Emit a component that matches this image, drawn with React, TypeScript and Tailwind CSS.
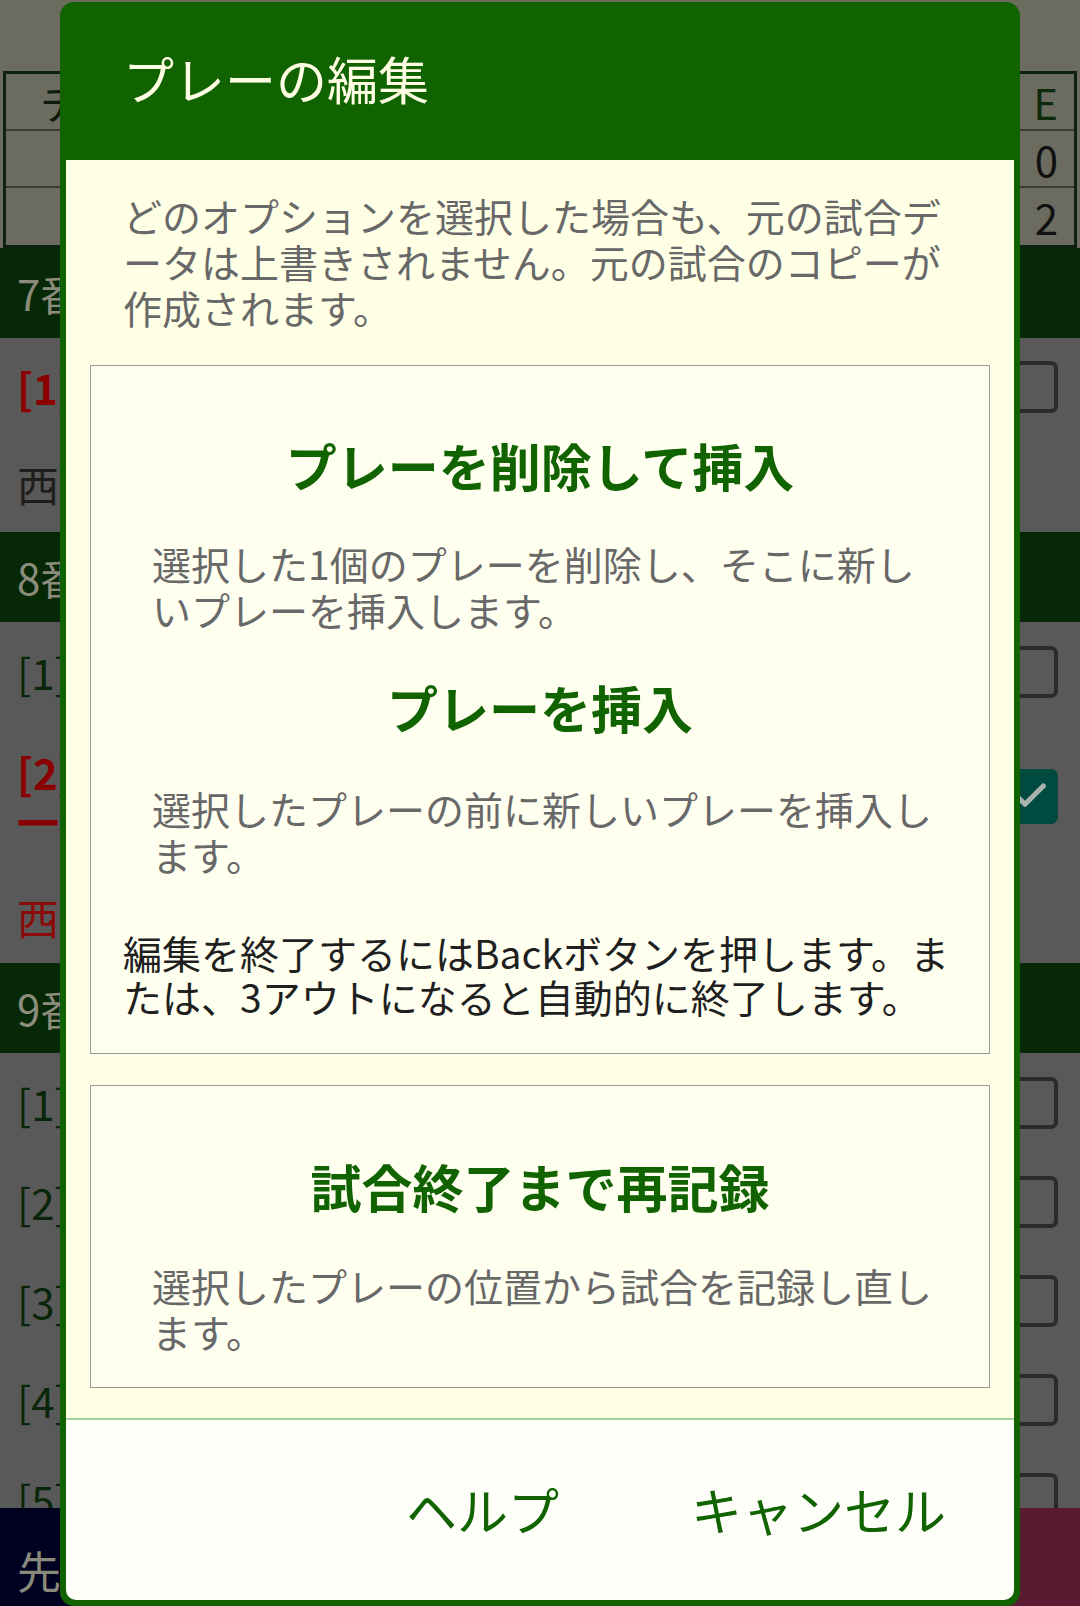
import { Check } from "lucide-react";

const CheckBox = ({ checked = false }: { checked?: boolean }) =>
  checked ? (
    <div className="w-[56px] h-[55px] rounded-[7px] bg-[#004a40] flex items-center justify-center">
      <Check size={40} strokeWidth={3} className="text-[#a9b3ad]" />
    </div>
  ) : (
    <div className="w-[54px] h-[52px] rounded-[7px] border-[4px] border-[#2b2b2b]" />
  );

const Row = ({
  h,
  children,
  box,
}: {
  h: string;
  children: React.ReactNode;
  box?: "on" | "off";
}) => (
  <div className={`${h} flex items-center justify-between pl-[17px] pr-[22px]`}>
    <div>{children}</div>
    {box && <CheckBox checked={box === "on"} />}
  </div>
);

const Band = ({ label }: { label: string }) => (
  <div className="h-[90px] bg-[#062806] flex items-center pl-[17px] text-[42px] text-[#8c8c7c]">
    {label}
  </div>
);

const Background = () => (
  <div className="flex flex-col text-[42px] leading-none">
    <div className="h-[71px] bg-[#6b6b5f]" />

    {/* score table */}
    <div className="h-[177px] bg-[#6b6b5f] flex justify-between">
      <div className="ml-[3px] w-[200px] border-[3px] border-r-0 border-[#0d220d] grid grid-rows-3">
        <div className="border-b-2 border-[#3a3a36] flex items-center pl-[34px] text-[#0d1a0d]">チーム</div>
        <div className="border-b-2 border-[#3a3a36]" />
        <div />
      </div>
      <div className="mr-[3px] w-[200px] border-[3px] border-l-0 border-[#0d220d] grid grid-rows-3 text-[#111]">
        <div className="border-b-2 border-[#3a3a36] flex items-center justify-end pr-[16px] text-[#0d2a0d]">E</div>
        <div className="border-b-2 border-[#3a3a36] flex items-center justify-end pr-[16px]">0</div>
        <div className="flex items-center justify-end pr-[16px]">2</div>
      </div>
    </div>

    <Band label="7番 打者" />
    <div className="bg-[#595959]">
      <Row h="h-[98px]" box="off">
        <span className="font-bold text-[#8a0000]">[1]</span>
      </Row>
      <Row h="h-[96px]">
        <span className="text-[#1e1e1e]">西</span>
      </Row>
    </div>

    <Band label="8番 打者" />
    <div className="bg-[#595959]">
      <Row h="h-[100px]" box="off">
        <span className="text-[#0a260a]">[1]</span>
      </Row>
      <div className="h-[148px] flex items-center justify-between pl-[17px] pr-[22px]">
        <div className="flex flex-col gap-[7px]">
          <span className="font-bold text-[#8a0000]">[2]</span>
          <span className="font-bold text-[#8a0000]">一</span>
        </div>
        <CheckBox checked />
      </div>
      <Row h="h-[93px]">
        <span className="text-[#8a0a0a]">西</span>
      </Row>
    </div>

    <Band label="9番 打者" />
    <div className="bg-[#595959] h-[455px] overflow-hidden">
      {["[1]", "[2]", "[3]", "[4]", "[5]"].map((t) => (
        <Row key={t} h="h-[99px]" box="off">
          <span className="text-[#0a260a]">{t}</span>
        </Row>
      ))}
    </div>

    <div className="h-[99px] flex">
      <div className="w-1/2 bg-[#000020] pl-[17px] pt-[40px] text-[44px] text-[#8a8a7a]">先攻</div>
      <div className="w-1/2 bg-[#5a1a32]" />
    </div>
  </div>
);

const OptionTitle = ({ children }: { children: React.ReactNode }) => (
  <h3 className="text-center text-[51px] font-bold leading-[60px] text-[#116300]">{children}</h3>
);

const Desc = ({ children, className = "" }: { children: React.ReactNode; className?: string }) => (
  <p className={`pl-[61px] text-[39px] leading-[46px] text-[#686868] whitespace-nowrap ${className}`}>
    {children}
  </p>
);

export default function App() {
  return (
    <div className="relative w-[1080px] h-[1606px] overflow-hidden bg-[#595959] font-['Noto_Sans_CJK_JP',sans-serif]">
      <Background />

      {/* edit dialog */}
      <div className="absolute left-[60px] top-[2px] w-[960px] rounded-[14px] bg-[#116300] px-[6px] pb-[6px]">
        <div className="h-[158px] flex items-center pl-[57px] pb-[5px] text-[51px] leading-none text-[#fffde4]">
          プレーの編集
        </div>

        <div className="rounded-b-[10px] overflow-hidden">
          <div className="bg-[#ffffe6] pt-[32px] pb-[30px] px-[24px]">
            <p className="pl-[33px] text-[39px] leading-[46px] text-[#686868] whitespace-nowrap">
              どのオプションを選択した場合も、元の試合デ
              <br />
              ータは上書きされません。元の試合のコピーが
              <br />
              作成されます。
            </p>

            <div className="mt-[35px] border border-[#9a9a9a] bg-[#fffff0] pt-[69px] pb-[35px]">
              <OptionTitle>プレーを削除して挿入</OptionTitle>
              <Desc className="mt-[45px]">
                選択した1個のプレーを削除し、そこに新し
                <br />
                いプレーを挿入します。
              </Desc>
              <div className="mt-[45px]">
                <OptionTitle>プレーを挿入</OptionTitle>
              </div>
              <Desc className="mt-[48px]">
                選択したプレーの前に新しいプレーを挿入し
                <br />
                ます。
              </Desc>
              <p className="mt-[53px] pl-[32px] text-[39px] leading-[44px] text-[#1f1f1f] whitespace-nowrap">
                編集を終了するにはBackボタンを押します。ま
                <br />
                たは、3アウトになると自動的に終了します。
              </p>
            </div>

            <div className="mt-[31px] border border-[#9a9a9a] bg-[#fffff0] pt-[70px] pb-[33px]">
              <OptionTitle>試合終了まで再記録</OptionTitle>
              <Desc className="mt-[46px]">
                選択したプレーの位置から試合を記録し直し
                <br />
                ます。
              </Desc>
            </div>
          </div>

          <div className="h-[182px] bg-[#fffffa] border-t-2 border-[#a3cf9c] flex items-center justify-end gap-[132px] pr-[68px] pb-[2px] text-[51px] leading-none text-[#116300]">
            <button type="button">ヘルプ</button>
            <button type="button">キャンセル</button>
          </div>
        </div>
      </div>
    </div>
  );
}
